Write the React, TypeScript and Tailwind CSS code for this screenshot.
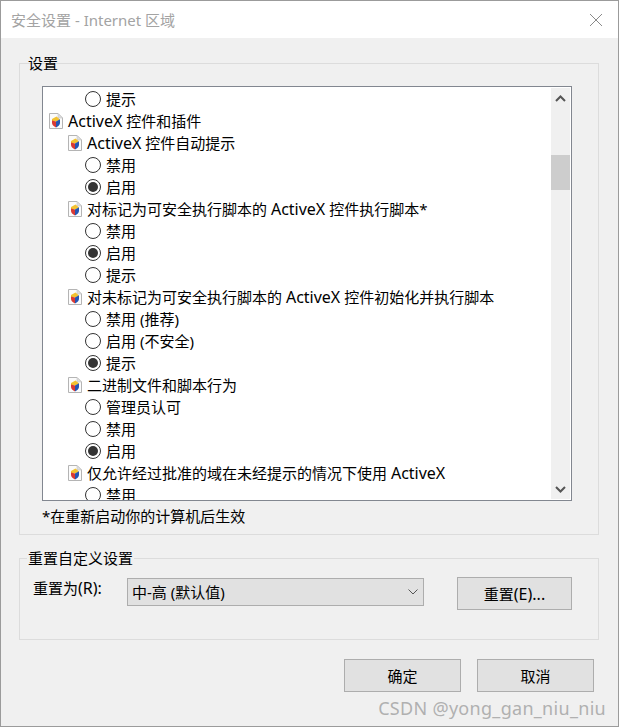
const FONT = "font-['Noto_Sans','Noto_Sans_CJK_SC',sans-serif]";

function DocIcon() {
  return (
    <svg width="14" height="16" viewBox="0 0 14 16" className="shrink-0">
      <path d="M0.5 0.5H9L13.5 5V15.5H0.5Z" fill="#fbfbfb" stroke="#b4b4b4" />
      <path d="M9 0.5V5H13.5Z" fill="#dedede" stroke="#c4c4c4" strokeWidth="0.6" />
      <path d="M7.5 3.5L3 6V8L7.5 8.5L11 6.5Z" fill="#f2c230" />
      <path d="M3 7.5V10C3 11.8 4.6 13.3 7 14.5V8.5Z" fill="#d93a34" />
      <path d="M7 8.5V14.5C9.4 13.3 11 11.8 11 10V6.2Z" fill="#2456b4" />
    </svg>
  );
}

function Radio({ label, on }: { label: string; on?: boolean }) {
  return (
    <div className="flex items-center h-[22px] pl-[42px] gap-[5px] shrink-0">
      <span className="w-4 h-4 rounded-full border border-[#333333] bg-white flex items-center justify-center">
        {on && <span className="w-[10px] h-[10px] rounded-full bg-[#333333]" />}
      </span>
      <span>{label}</span>
    </div>
  );
}

function Ax() {
  return <span className="text-[16px]">ActiveX</span>;
}

function Head({ children, top }: { children: React.ReactNode; top?: boolean }) {
  return (
    <div className={top ? "flex items-center h-[22px] pl-[6px] gap-[5px] shrink-0" : "flex items-center h-[22px] pl-[25px] gap-[5px] shrink-0"}>
      <DocIcon />
      <span>{children}</span>
    </div>
  );
}

function Btn({ children, w, h }: { children: React.ReactNode; w: string; h: string }) {
  return (
    <div className={`${w} ${h} bg-[#e1e1e1] border border-[#adadad] flex items-center justify-center text-[15px] text-black`}>
      {children}
    </div>
  );
}

export default function App() {
  return (
    <div className={`${FONT} relative w-[619px] h-[727px] bg-[#f0f0f0] border border-[#9b9b9b] text-[15px] leading-[22px] text-black overflow-hidden`}>
      <div className="h-[37px] bg-white flex items-center justify-between pl-[10px] pr-[15px]">
        <span className="text-[#a3a3a3] text-[15px]">安全设置 - Internet 区域</span>
        <svg width="14" height="14" viewBox="0 0 14 14">
          <path d="M1 1L13 13M13 1L1 13" stroke="#8a8a8a" strokeWidth="1" fill="none" />
        </svg>
      </div>

      <div className="pl-[18px] pr-[19px] pt-[25px]">
        <div className="relative h-[472px] border border-[#dcdcdc] pt-[22px] pl-[22px] pr-[26px]">
          <span className="absolute left-[7px] -top-[12px] px-[1px]">设置</span>
          <div className="relative h-[415px] border border-[#828790] bg-white overflow-hidden flex flex-col pt-[1px]">
            <Radio label="提示" />
            <Head top><Ax /> 控件和插件</Head>
            <Head><Ax /> 控件自动提示</Head>
            <Radio label="禁用" />
            <Radio label="启用" on />
            <Head>对标记为可安全执行脚本的 <Ax /> 控件执行脚本*</Head>
            <Radio label="禁用" />
            <Radio label="启用" on />
            <Radio label="提示" />
            <Head>对未标记为可安全执行脚本的 <Ax /> 控件初始化并执行脚本</Head>
            <Radio label="禁用 (推荐)" />
            <Radio label="启用 (不安全)" />
            <Radio label="提示" on />
            <Head>二进制文件和脚本行为</Head>
            <Radio label="管理员认可" />
            <Radio label="禁用" />
            <Radio label="启用" on />
            <Head>仅允许经过批准的域在未经提示的情况下使用 <Ax /></Head>
            <Radio label="禁用" />
            <div className="absolute right-[1px] top-[1px] bottom-[1px] w-[19px] bg-[#f0f0f0] flex flex-col">
              <div className="h-[17px] flex items-center justify-center shrink-0 mt-[2px]">
                <svg width="11" height="7" viewBox="0 0 11 7"><path d="M1 6L5.5 1.5L10 6" stroke="#555555" strokeWidth="2" fill="none" /></svg>
              </div>
              <div className="h-[35px] bg-[#cdcdcd] mt-[48px]" />
              <div className="flex-1" />
              <div className="h-[17px] flex items-center justify-center shrink-0 mb-[1px]">
                <svg width="11" height="7" viewBox="0 0 11 7"><path d="M1 1L5.5 5.5L10 1" stroke="#555555" strokeWidth="2" fill="none" /></svg>
              </div>
            </div>
          </div>
          <div className="pt-[4px]">*在重新启动你的计算机后生效</div>
        </div>

        <div className="relative mt-[23px] h-[82px] border border-[#dcdcdc] pl-[13px] pr-[26px] pt-[18px] flex items-start">
          <span className="absolute left-[7px] -top-[12px] px-[1px] bg-[#f0f0f0]">重置自定义设置</span>
          <span className="w-[94px] shrink-0">重置为<span className="text-[16px]">(R):</span></span>
          <div className="w-[297px] h-[28px] bg-[#e1e1e1] border border-[#adadad] flex items-center justify-between pl-[4px] pr-[5px] mt-[1px]">
            <span>中-高 (默认值)</span>
            <svg width="10" height="6" viewBox="0 0 10 6"><path d="M0.5 0.5L5 5L9.5 0.5" stroke="#555555" fill="none" /></svg>
          </div>
          <div className="ml-[33px]">
            <Btn w="w-[115px]" h="h-[33px]"><span>重置<span className="text-[16px]">(E)...</span></span></Btn>
          </div>
        </div>

        <div className="flex justify-end gap-[16px] mt-[19px] pr-[5px]">
          <Btn w="w-[117px]" h="h-[33px]">确定</Btn>
          <Btn w="w-[117px]" h="h-[33px]">取消</Btn>
        </div>
      </div>

      <span className="absolute right-[12px] bottom-[6px] text-[18px] leading-[24px] text-[#b0b0b0] tracking-[0.3px]">CSDN @yong_gan_niu_niu</span>
    </div>
  );
}
